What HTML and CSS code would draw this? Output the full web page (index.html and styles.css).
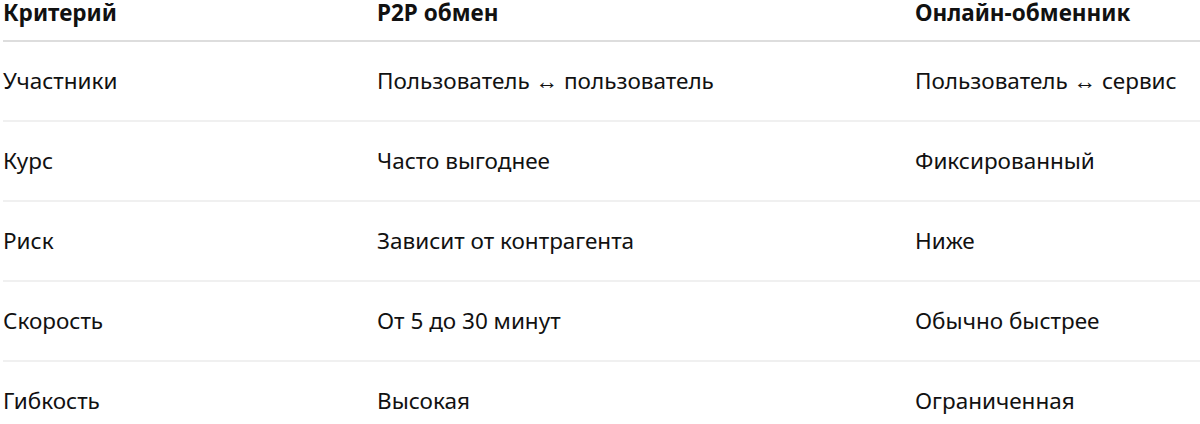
FILE: index.html
```html
<!DOCTYPE html>
<html lang="ru">
<head>
<meta charset="utf-8">
<link rel="stylesheet" href="styles.css">
</head>
<body>
<table class="cmp">
  <colgroup>
    <col class="c1"><col class="c2"><col class="c3">
  </colgroup>
  <thead>
    <tr><th>Критерий</th><th>P2P обмен</th><th>Онлайн-обменник</th></tr>
  </thead>
  <tbody>
    <tr><td>Участники</td><td>Пользователь ↔ пользователь</td><td>Пользователь ↔ сервис</td></tr>
    <tr><td>Курс</td><td>Часто выгоднее</td><td>Фиксированный</td></tr>
    <tr><td>Риск</td><td>Зависит от контрагента</td><td>Ниже</td></tr>
    <tr><td>Скорость</td><td>От 5 до 30 минут</td><td>Обычно быстрее</td></tr>
    <tr><td>Гибкость</td><td>Высокая</td><td>Ограниченная</td></tr>
  </tbody>
</table>
</body>
</html>
```
FILE: styles.css
```css
html, body {
  margin: 0;
  padding: 0;
  background: #ffffff;
}
body {
  font-family: "Noto Sans", "Open Sans", sans-serif;
  font-size: 22.5px;
  color: #111111;
  overflow: hidden;
}
.cmp {
  margin-left: 3px;
  width: 1197px;
  border-collapse: collapse;
  table-layout: fixed;
}
.c1 { width: 374px; }
.c2 { width: 538px; }
.cmp th {
  text-align: left;
  font-weight: 700;
  height: 40px;
  padding: 0;
  vertical-align: top;
  line-height: 26px;
  border-bottom: 2px solid #dddddd;
  white-space: nowrap;
}
.cmp td {
  height: 78px;
  padding: 0;
  line-height: 26px;
  vertical-align: middle;
  border-bottom: 2px solid #f0f0f0;
  white-space: nowrap;
}
```
